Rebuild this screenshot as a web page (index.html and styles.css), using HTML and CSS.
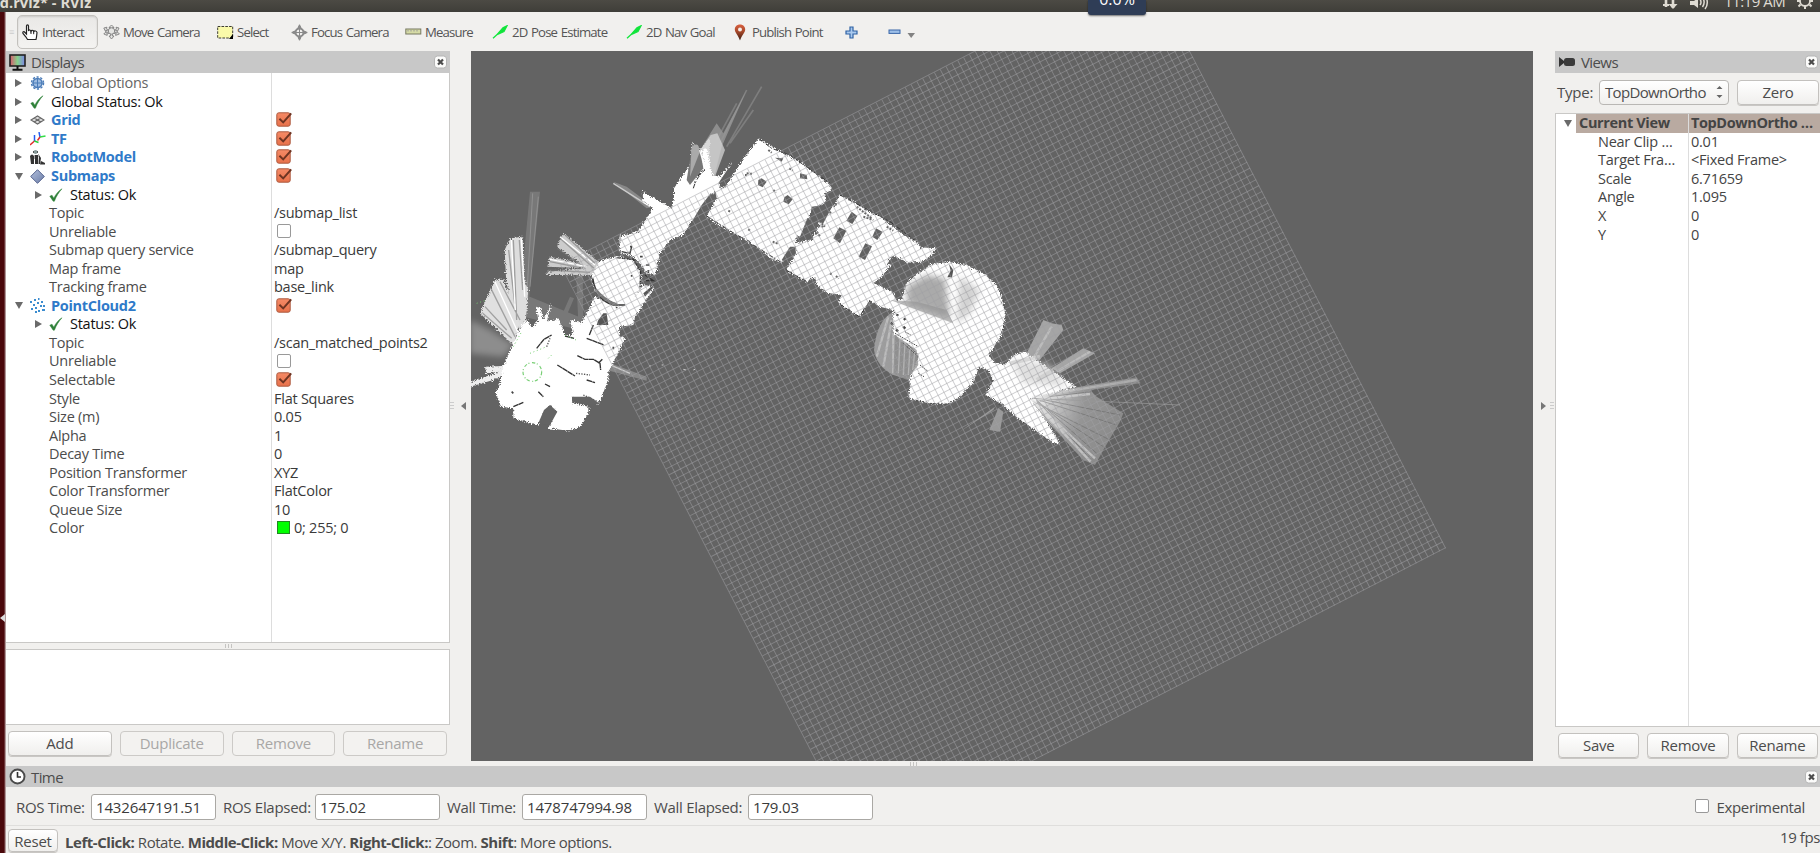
FILE: index.html
```html
<!DOCTYPE html>
<html lang="en">
<head>
<meta charset="utf-8">
<title>RViz</title>
<link rel="stylesheet" href="styles.css">
</head>
<body>
<svg class="defs" width="0" height="0" aria-hidden="true">
  <defs>
    <linearGradient id="chk" x2="0" y2="1"><stop offset="0" stop-color="#f58a66"/><stop offset="1" stop-color="#e8714a"/></linearGradient>
    <linearGradient id="pin" x2="0" y2="1"><stop offset="0" stop-color="#d9603f"/><stop offset=".45" stop-color="#a5482a"/><stop offset="1" stop-color="#3c1c10"/></linearGradient>
    <linearGradient id="scr"><stop offset="0" stop-color="#d85a6c"/><stop offset=".5" stop-color="#86d08c"/><stop offset="1" stop-color="#7c86e8"/></linearGradient>
    <linearGradient id="dia" x2="1" y2="1"><stop offset="0" stop-color="#b4c2de"/><stop offset="1" stop-color="#6a7ba6"/></linearGradient>
  </defs>
  <symbol id="check" viewBox="0 0 16 16"><rect x=".8" y="1.8" width="13.4" height="13.4" rx="2" fill="url(#chk)" stroke="#ab5a40"/><path d="M3.4 7.8L7.2 11.4L15.2 2.4" fill="none" stroke="#6e3422" stroke-width="2"/></symbol>
  <symbol id="tick" viewBox="0 0 14 14"><path d="M.8 8.2L3 7.2L4.8 10.2C7 5.8 9.4 3 13 .8C9.600 4.500 7.500 8 5.400 13.200H4.200Z" fill="#2e8038" stroke="#2e8038" stroke-width=".5"/></symbol>
  <symbol id="close" viewBox="0 0 13 13"><rect x=".5" y=".5" width="12" height="12" rx="3" fill="#fbfbfa" stroke="#b5b5b5"/><path d="M4 4L9 9M9 4L4 9" stroke="#4c4c4c" stroke-width="2.2"/></symbol>
  <symbol id="arrow" viewBox="0 0 16 14"><path d="M1 13.200L12 3.200M5 9.600L11 2.800L15 .8L12 6.600Z" fill="#12dc3c" stroke="#12e63c" stroke-width="1.300"/></symbol>
</svg>
<div class="screen">
  <header class="titlebar"><span class="wtitle">ed.rviz* - RViz</span>
    <div class="tray">
      <svg width="16" height="14"><path d="M4 0V7M11 0V8" stroke="#dfdbd2" stroke-width="2.600"/><path d="M6.500 4H15.500L11 9Z" fill="#dfdbd2"/><path d="M1 5H7" stroke="#dfdbd2" stroke-width="2"/></svg>
      <svg width="20" height="14"><path d="M0 1H4L8 -2V8L4 5H0Z" fill="#dfdbd2"/><path d="M10 -1Q12 2.500 10 5M13 -2Q15.500 3 12.500 7M16 -3Q19 4 15 9" fill="none" stroke="#dfdbd2" stroke-width="1.500"/></svg>
      <span class="clock">11:19 AM</span>
      <svg width="16" height="14"><circle cx="8" cy="1" r="5" fill="none" stroke="#dfdbd2" stroke-width="1.800"/><path d="M8 6V9M3.500 4.500L1.500 6.500M12.500 4.500L14.500 6.500M0 1H3M13 1H16" stroke="#dfdbd2" stroke-width="2"/></svg>
    </div>
    <div class="badge"><span>0.0%</span></div>
  </header>
  <div class="edge"><i></i></div>
  <div class="window">
    <nav class="toolbar">
      <span class="grip">≡</span>
      <div class="tool pressed"><svg width="16" height="17" viewBox="0 0 16 17"><path d="M4.500 10V2Q4.500 .8 5.500 .8Q6.500 .8 6.500 2V7Q6.800 5.800 7.800 6Q8.800 6 9 7.200Q9.500 6 10.500 6.300Q11.600 6.500 11.700 7.500Q12.500 6.600 13.500 7Q14.800 7.200 15 8.500L14.500 13L14 15.500H5.500L4 13L1 9.500Q.4 7.500 2 7.500Z" fill="#fff" stroke="#222" stroke-width="1.200"/><path d="M9 7V10M11.700 7.500V10.200" stroke="#222"/></svg><span>Interact</span></div>
      <div class="tool"><svg width="17" height="16" viewBox="0 0 17 16"><g fill="#e5e5e3" stroke="#808080" stroke-width=".9"><path d="M8.500 1L6 3.500H7.600V12H6L8.500 15L11 12H9.400V3.500H11Z"/><path d="M.8 4L4 3.200L3.200 4.800L14 9.200L14 7.600L16.400 10L12.600 11.400L13 10L2.800 6.200L2.600 7.600Z"/><path d="M16 4L13 3.200L13.800 4.800L3.200 9.200L3.200 7.600L.8 10L4.200 11.400L4 10L14 6.200L14.300 7.600Z"/><circle cx="8.500" cy="7" r="3.200"/></g></svg><span>Move Camera</span></div>
      <div class="tool"><svg width="17" height="15"><rect x=".7" y="1.500" width="15" height="11.500" fill="#fafaaa" stroke="#3c3c32" stroke-dasharray="2.600 1.200"/><path d="M16 9V14H12Z"/></svg><span>Select</span></div>
      <div class="tool"><svg width="17" height="17" viewBox="0 0 17 17"><g fill="none" stroke="#8a8a8a"><circle cx="8.500" cy="8.500" r="4" stroke-width="2"/><path d="M8.500 .8V16.200M.8 8.500H16.200M8.500 .8L7 3.500H10ZM8.500 16.200L7 13.500H10ZM.8 8.500L3.500 7V10ZM16.200 8.500L13.500 7V10Z"/></g></svg><span>Focus Camera</span></div>
      <div class="tool"><svg width="17" height="8"><rect x=".8" y="1" width="15" height="5" fill="#d6dba6" stroke="#777961"/><path d="M3 2V3.500M6 2V3.500M9 2V3.500M12 2V3.500" stroke="#999"/></svg><span>Measure</span></div>
      <div class="tool"><svg width="16" height="14"><use href="#arrow"/></svg><span>2D Pose Estimate</span></div>
      <div class="tool"><svg width="16" height="14"><use href="#arrow"/></svg><span>2D Nav Goal</span></div>
      <div class="tool"><svg width="12" height="17"><path d="M6 .5C2.800 .5 .8 2.800 .8 5.500C.8 8.500 4 10.500 6 16.500C8 10.500 11.200 8.500 11.200 5.500C11.200 2.800 9.200 .5 6 .5Z" fill="url(#pin)"/><circle cx="6" cy="5.500" r="2" fill="#f5eeea"/></svg><span>Publish Point</span></div>
      <div class="tool"><svg width="13" height="13"><path d="M5 1H8V5H12V8H8V12H5V8H1V5H5Z" fill="#a9c9ee" stroke="#2f62a4" stroke-width="1.200"/></svg></div>
      <div class="tool"><svg width="28" height="14"><rect x="2" y="5" width="11" height="3.400" fill="#9dbfe8" stroke="#3a66a8"/><path d="M20.500 8H28L24.200 13Z" fill="#828282"/></svg></div>
    </nav>
    <div class="middle">
      <aside class="displays">
        <div class="dock"><svg width="17" height="17"><rect x="1" y="1" width="15" height="11" fill="url(#scr)" stroke="#222" stroke-width="1.600"/><path d="M8.500 12V15M3.500 15.700H13.500" stroke="#111" stroke-width="2"/></svg><span>Displays</span><svg class="x" width="13" height="14"><use href="#close"/></svg></div>
        <div class="tree">
          <div class="names">
            <div class="row top"><i class="r"></i><svg class="ic" width="15" height="15"><circle cx="7.500" cy="7" r="4.500" fill="#9dbbe0" stroke="#4b7cb8" stroke-width="1.500"/><circle cx="7.500" cy="7" r="6" fill="none" stroke="#4b7cb8" stroke-width="1.500" stroke-dasharray="2.200 1.600"/><path d="M7.500 2V12M2.500 7H12.500" stroke="#4b7cb8"/></svg><span class="g">Global Options</span></div>
            <div class="row top"><i class="r"></i><svg class="ic" width="14" height="14"><use href="#tick"/></svg><span class="k">Global Status: Ok</span></div>
            <div class="row top"><i class="r"></i><svg class="ic" width="15" height="11"><path d="M1 5L7.500 1L14 5L7.500 9ZM4.200 3L10.800 7M4.200 7L10.800 3" fill="#ddd" stroke="#666" stroke-width="1.100"/></svg><b>Grid</b></div>
            <div class="row top"><i class="r"></i><svg class="ic" width="16" height="14"><g fill="none" stroke-width="1.500"><path d="M4.500 9V3" stroke="#225cf0"/><path d="M4.500 9L0 13" stroke="#e22c2c"/><path d="M4.500 9L8.500 10.500" stroke="#23d13b"/><path d="M10 5L9 0" stroke="#225cf0"/><path d="M10 5L15.500 4" stroke="#32dd46"/><path d="M10 5L7.500 8.500" stroke="#e22c2c"/></g></svg><b>TF</b></div>
            <div class="row top"><i class="r"></i><svg class="ic" width="16" height="15"><path d="M3 1H8V3H3ZM0 6Q2 3 4 6V14H1ZM5 5H8V14H5ZM9 5L11 8L10 14H8.500ZM11 11L15 13V14.500H10Z" fill="#333"/><circle cx="5.500" cy="2" r="2" fill="#899"/><path d="M4.500 5V9M8.500 4V7" stroke="#aaa"/></svg><b>RobotModel</b></div>
            <div class="row top"><i class="d"></i><svg class="ic" width="15" height="15"><path d="M7.500 .7L14.300 7.500L7.500 14.300L.7 7.500Z" fill="url(#dia)" stroke="#52608c"/></svg><b>Submaps</b></div>
            <div class="row sub"><i class="r"></i><svg class="ic" width="14" height="14"><use href="#tick"/></svg><span class="k">Status: Ok</span></div>
            <div class="row leaf">Topic</div>
            <div class="row leaf">Unreliable</div>
            <div class="row leaf">Submap query service</div>
            <div class="row leaf">Map frame</div>
            <div class="row leaf">Tracking frame</div>
            <div class="row top"><i class="d"></i><svg class="ic" width="16" height="15"><path d="M0 4H2M4 2H6M8 1H9.500M11 4H13M3 7H5M7 5H9M10 8H12M1 11H3M5 10H7M8 13H10M12 12H15M5 14H7M13 8H15" fill="none" stroke="#3b8ccf" stroke-width="1.900"/></svg><b>PointCloud2</b></div>
            <div class="row sub"><i class="r"></i><svg class="ic" width="14" height="14"><use href="#tick"/></svg><span class="k">Status: Ok</span></div>
            <div class="row leaf">Topic</div>
            <div class="row leaf">Unreliable</div>
            <div class="row leaf">Selectable</div>
            <div class="row leaf">Style</div>
            <div class="row leaf">Size (m)</div>
            <div class="row leaf">Alpha</div>
            <div class="row leaf">Decay Time</div>
            <div class="row leaf">Position Transformer</div>
            <div class="row leaf">Color Transformer</div>
            <div class="row leaf">Queue Size</div>
            <div class="row leaf">Color</div>
          </div>
          <div class="values">
            <div class="row"></div><div class="row"></div>
            <div class="row"><svg class="cb"><use href="#check"/></svg></div>
            <div class="row"><svg class="cb"><use href="#check"/></svg></div>
            <div class="row"><svg class="cb"><use href="#check"/></svg></div>
            <div class="row"><svg class="cb"><use href="#check"/></svg></div>
            <div class="row"></div>
            <div class="row">/submap_list</div>
            <div class="row"><i class="box"></i></div>
            <div class="row">/submap_query</div>
            <div class="row">map</div>
            <div class="row">base_link</div>
            <div class="row"><svg class="cb"><use href="#check"/></svg></div>
            <div class="row"></div>
            <div class="row">/scan_matched_points2</div>
            <div class="row"><i class="box"></i></div>
            <div class="row"><svg class="cb"><use href="#check"/></svg></div>
            <div class="row">Flat Squares</div>
            <div class="row">0.05</div>
            <div class="row">1</div>
            <div class="row">0</div>
            <div class="row">XYZ</div>
            <div class="row">FlatColor</div>
            <div class="row">10</div>
            <div class="row"><i class="swatch"></i>0; 255; 0</div>
          </div>
        </div>
        <div class="hgrip"><i></i><i></i><i></i></div>
        <div class="info"></div>
        <div class="buttons"><div class="btn">Add</div><div class="btn off">Duplicate</div><div class="btn off">Remove</div><div class="btn off">Rename</div></div>
      </aside>
      <div class="splitter left"><span class="dots"></span><i class="tl"></i></div>
      <main class="viewer">
        <svg width="1062" height="710" viewBox="471 51 1062 710">
          <defs>
            <filter id="rough" x="-5%" y="-5%" width="110%" height="110%"><feTurbulence type="fractalNoise" baseFrequency=".3" numOctaves="3" seed="4"/><feDisplacementMap in="SourceGraphic" scale="16" xChannelSelector="R" yChannelSelector="G"/></filter>
            <filter id="soft" x="-20%" y="-20%" width="140%" height="140%"><feGaussianBlur stdDeviation="9"/></filter>
            <radialGradient id="f2" gradientUnits="userSpaceOnUse" cx="540" cy="475" r="330"><stop offset="0" stop-color="#fff"/><stop offset=".2" stop-color="#ccc"/><stop offset=".5" stop-color="#959595"/><stop offset="1" stop-color="#868686"/></radialGradient>
          </defs>
          <rect x="471" y="51" width="1062" height="710" fill="#636363"/>

          <!-- south-west rooms -->
          <g transform="translate(470 90) scale(.33333)">
            <path d="M180 305H210L178 620H150ZM130 600L350 690L330 720L160 680ZM318 540L338 545L340 690L325 700ZM300 620L312 625L280 700H265Z" fill="#999" opacity=".4"/>
            <path d="M0 690L60 720L130 765L100 800L0 790Z" fill="#ccc" opacity=".4" filter="url(#soft)"/>
            <path d="M188 310L172 590M205 320L180 590" stroke="#aaa" stroke-width="3" opacity=".5"/>
            <path d="M430 275L470 290L550 350L530 355ZM410 815L530 860V872L410 840Z" fill="#999" opacity=".7"/>
            <path d="M430 280L540 350M410 820L480 850" stroke="#ccc" stroke-width="4"/>
            <g filter="url(#rough)">
              <path d="M120 445L158 440L162 570L175 600L165 720L128 700L108 560L104 480Z" fill="#ddd"/>
              <path d="M75 568L100 570L150 700L130 765L30 670Z" fill="#e0e0e0"/>
              <path d="M282 430L385 515L370 555L225 555L232 545L350 535L232 530L240 500L330 520L262 470L270 450Z" fill="#ccc"/>
              <path d="M0 876L90 845L48 850L45 830L100 828L110 850L70 870L0 890Z" fill="#eee"/>
              <path d="M518 305L605 355L612 325V295L660 225L668 155L690 180L720 145V320L705 350L660 400L640 435L600 450L570 490L555 555L530 550L518 530L490 500L450 490L448 440L505 425L548 355L520 335Z" fill="#fff"/>
              <path d="M385 515L440 498L490 510L515 550L512 595L490 630L520 585L555 590L495 680L490 705L448 710L447 735L465 745L430 820L415 845V870L385 945L306 920L310 940L355 950V970L330 1010L295 1022L235 1015L258 965L240 945L222 970L205 1005L130 985V955L95 950L76 910L90 880L100 830L128 765L155 705L175 690L185 715L205 690L198 650L212 655L220 690L245 640L230 695L265 685L285 735H310L300 690L335 700L375 620L440 645L375 605L365 560Z" fill="#fff"/>
            </g>
            <path d="M130 450L140 690M148 450L158 600M116 480L134 640M60 590L135 740M90 575L150 690M45 650L110 720M38 670L125 745M270 445L372 535M262 475L340 530M285 435L375 520M240 515L340 535M234 540L360 547" fill="none" stroke="#777" stroke-width="4" opacity=".6"/>
            <path d="M124 450L136 660M154 445L164 620M75 575L145 730M270 440L375 525M240 508L350 530" fill="none" stroke="#fff" stroke-width="4"/>
            <path d="M668 160Q690 170 700 235L660 285L650 270Z" fill="#777"/>
            <path d="M670 295Q680 245 715 235M455 485L480 490L485 470M525 555L550 572H528" fill="none" stroke="#333" stroke-width="4"/>
            <path d="M440 503L490 508L512 545L510 592" fill="none" stroke="#333" stroke-width="4" stroke-dasharray="12 3"/>
            <path d="M368 565Q378 630 430 645H465" fill="none" stroke="#333" stroke-width="5"/>
            <path d="M376 598Q400 630 440 645" fill="none" stroke="#777" stroke-width="9"/>
            <path d="M385 690L400 670H410L415 705H380ZM520 610L550 585L548 595L525 620Z" fill="#555"/>
            <path d="M200 775L222 748L245 735M322 797L345 808L370 808L390 820L392 840M385 820L397 808M350 745L402 765M262 825L315 858M350 870L375 878M205 905L220 920M130 950L160 937M358 735L370 705M285 738L312 745M225 882L240 890" fill="none" stroke="#333" stroke-width="4" stroke-dasharray="17 1"/>
            <path d="M318 850L360 855M340 915L390 938M230 770L240 745" stroke="#555" stroke-width="4" stroke-dasharray="4 4" fill="none"/>
            <path d="M306 920H360L390 942L350 945L306 935ZM222 960L240 945L262 965L240 1005L205 1000Z" fill="#646464"/>
            <circle cx="187" cy="846" r="28" fill="none" stroke="#5fc55c" stroke-width="3.500" stroke-dasharray="10 5 3 8" opacity=".85"/>
            <path d="M130 770L155 725M20 640L50 630M180 790L230 770M285 735L318 750M235 805L250 790" stroke="#75cf70" stroke-width="3" stroke-dasharray="3 8"/>
            <path d="M540 825V830M640 838L648 840M670 840L675 838M575 825H580" stroke="#ccc" stroke-width="3"/>
            <path d="M510 500H518M528 525H538M535 540V550M485 555V560M430 770V778M440 650V655M125 905L130 910M480 470H486" stroke="#444" stroke-width="5"/>
          </g>

          <!-- central rooms -->
          <g transform="translate(690 110) scale(.33333)">
            <path d="M100 70L170 -60L95 110L75 190L60 200L30 120L80 40Z" fill="#aaa" opacity=".6"/>
            <path d="M110 110L215 -70M90 100L170 -60M120 100L190 0M80 90L140 -20" stroke="#999" stroke-width="5" opacity=".5"/>
            <path d="M35 115L62 75L82 70L105 120L75 200L60 195Z" fill="#ddd" opacity=".7"/>
            <path d="M5 110Q30 90 28 130L0 200Z" fill="#aaa"/>
            <g filter="url(#rough)" fill="#fff">
              <path d="M35 120L50 115L65 195L90 200L125 155L95 215L85 235L65 255L40 290L0 340V250L15 210L45 175Z"/>
              <path d="M190 108L205 85L245 110L280 130L330 155L420 225L425 240L405 250L410 275L365 300L335 375L320 380L315 410L275 458L250 450L190 405L140 375L85 345L50 318L80 265L75 235L105 232L155 155Z"/>
              <path d="M365 390L385 350L400 290L430 290L450 255L490 275L530 300L570 320L615 355L640 375L680 395L690 412L740 415L725 435L695 455L650 458L610 435L590 460L605 465L590 480L575 500L550 520L610 550L620 580L660 600L640 640L610 600L570 590L540 572L508 620L445 580L455 555L410 548L380 525L375 500L350 515L288 480L318 430L315 400Z"/>
            </g>
            <path d="M85 220L115 175L132 185L105 230ZM35 285L62 250L78 260L55 310L35 320L0 345ZM365 290L400 285L420 250L440 265L400 340L360 330ZM330 380L352 325L365 335L365 390ZM275 450L300 410H318L295 465ZM205 210L215 205L230 215L218 232L204 225ZM283 262L293 255L308 268L296 283L280 275ZM485 305L502 318L487 342L469 332ZM448 352L469 362L450 400L430 385ZM558 355L578 366L562 390L547 380ZM526 400L546 409L525 450L506 440ZM330 190L350 195L352 208L330 205ZM255 143L280 145L275 155Z" fill="#626262"/>
            <path d="M205 85L245 115L300 135L420 220M450 255L600 335L680 395M50 318L140 375L180 395M190 405L275 458M540 572L508 620L445 580M288 480L350 515M10 235Q20 200 45 180" fill="none" stroke="#333" stroke-width="3" stroke-dasharray="14 3 5 6"/>
            <path d="M170 190L190 192M250 240L258 248M298 175L308 182M175 358L180 362M115 302L122 306M248 395L265 402M420 490L425 493M438 498L446 506M165 195H170M365 340L390 380M375 370L385 375M395 340L405 350M410 300L425 310M520 320L550 330M375 345L400 350M435 285L445 280M235 120L245 128M500 290L545 325M590 350L610 362" stroke="#666" stroke-width="6" stroke-dasharray="6 4"/>
          </g>

          <!-- round hall and east room -->
          <g transform="translate(850 240) scale(.33333)">
            <path d="M130 215Q80 240 72 330Q80 380 130 405L180 420L210 330Z" fill="#9c9c9c"/>
            <path d="M115 230L80 350M125 240L100 380M130 280L130 400" stroke="#ddd" stroke-width="7" opacity=".5"/>
            <path d="M530 340L580 240L605 250L635 255L640 270L565 365ZM605 385L700 325L735 340L630 400Z" fill="#a5a5a5"/>
            <path d="M540 470L600 455L860 412L872 430L720 450L740 470L820 520L810 545L795 570L760 630L735 675L700 660L550 500Z" fill="url(#f2)"/>
            <path d="M435 500L325 578L430 510ZM445 505L460 515L450 575L418 570Z" fill="#999"/>
            <path d="M545 475L990 495" stroke="#999" stroke-width="3" opacity=".7"/>
            <g filter="url(#rough)" fill="#fff">
              <path d="M70 130L130 160L135 180L155 180L170 130L205 100L245 72L300 66L350 75L400 100L440 135L458 180L468 225L455 285L415 345L430 365L465 375L490 345L525 335L560 360L610 395L680 440L600 460L540 475L600 560L630 610L610 610L545 565L510 540L460 495L405 465L430 420L415 390L388 380L370 425L325 475L290 492L235 490L175 475L180 415L205 350L130 280L130 210L60 180Z"/>
            </g>
            <path d="M170 140L230 105L285 115L300 235L170 190Z" fill="#9c9c9c" filter="url(#soft)" opacity=".85"/>
            <path d="M330 110L390 150L360 220L320 250Z" fill="#bbb" filter="url(#soft)" opacity=".65"/>
            <path d="M480 360L600 370L650 440L520 430Z" fill="#ccc" filter="url(#soft)" opacity=".6"/>
            <path d="M120 180L310 250L290 210L200 185Z" fill="#909090" opacity=".6"/>
            <path d="M135 285L200 330L205 375L170 420L130 400Z" fill="#8b8b8b" opacity=".75"/>
            <path d="M150 295L145 400M165 305L160 405M180 320L175 405M195 330L188 390" stroke="#ccc" stroke-width="4" opacity=".6"/>
            <path d="M297 72L310 90L306 112L292 112L302 92Z" fill="#555"/>
            <path d="M150 415L178 425L180 440L168 470L150 450Z" fill="#636363"/>
            <path d="M135 280L205 320M170 310L205 345M205 350L160 310M210 375L235 395M205 400L222 410M165 275L182 285" stroke="#444" stroke-width="3" stroke-dasharray="5 3"/>
            <path d="M138 268L144 274M160 260L166 266M122 248L128 252M162 235L166 240M142 222V228" stroke="#444" stroke-width="7"/>
            <path d="M560 420L610 390M480 370L570 350" stroke="#ccc" stroke-width="12" opacity=".7"/>
            <path d="M550 490L690 655M550 485L780 600M560 480L740 640M560 475L810 525M560 480L720 655M560 485L760 620M560 478L800 555M600 470L725 455" stroke="#555" stroke-width="3" opacity=".4"/>
            <path d="M545 478L722 665M550 483L735 655M560 478L720 462" stroke="#e0e0e0" stroke-width="7" opacity=".6"/>
            <path d="M550 470L860 420M620 395L720 335M550 355L605 260" stroke="#e0e0e0" stroke-width="7" opacity=".4"/>
            <path d="M430 420L405 465L450 495M458 180L468 225L455 285M290 492L235 490L190 480M510 540L545 565L610 610" fill="none" stroke="#444" stroke-width="3" stroke-dasharray="6 5"/>
          </g>

          <!-- one-metre grid, 100 x 100 cells -->
          <g transform="translate(1446 548) rotate(-117.260)" fill="none" stroke="#a0a0a4" stroke-opacity=".55" stroke-width="657">
            <path d="M0 -328.500H658" stroke-dasharray=".9 5.670"/>
            <path d="M328.500 0V-658" stroke-dasharray=".9 5.670"/>
          </g>
        </svg>
      </main>
      <div class="splitter right"><i class="tr"></i><span class="dots"></span></div>
      <aside class="views">
        <div class="dock"><svg width="17" height="10"><path d="M0 0L5 4V6L0 10Z" fill="#333"/><rect x="5" y="1" width="11" height="8" rx="2.500" fill="#3b3b3b"/></svg><span>Views</span><svg class="x" width="13" height="14"><use href="#close"/></svg></div>
        <div class="type"><span>Type:</span><div class="combo"><span>TopDownOrtho</span><svg width="7" height="14"><path d="M.5 4L3.500 1L6.500 4ZM.5 10L3.500 13L6.500 10Z" fill="#666"/></svg></div><div class="btn zero">Zero</div></div>
        <div class="vtree">
          <div class="vn"><div class="row cur"><i class="d"></i><b>Current View</b></div><div class="row">Near Clip …</div><div class="row">Target Fra…</div><div class="row">Scale</div><div class="row">Angle</div><div class="row">X</div><div class="row">Y</div></div>
          <div class="vv"><div class="row cur"><b>TopDownOrtho …</b></div><div class="row">0.01</div><div class="row">&lt;Fixed Frame&gt;</div><div class="row">6.71659</div><div class="row">1.095</div><div class="row">0</div><div class="row">0</div></div>
        </div>
        <div class="vbuttons"><div class="btn">Save</div><div class="btn">Remove</div><div class="btn">Rename</div></div>
      </aside>
    </div>
    <div class="hgrip big"><i></i><i></i><i></i></div>
    <section class="time">
      <div class="dock"><svg width="17" height="17"><circle cx="8.500" cy="8.500" r="7" fill="#fff" stroke="#4a4a4a" stroke-width="1.900"/><path d="M8.500 4V9H12" fill="none" stroke="#333" stroke-width="1.600"/></svg><span>Time</span><svg class="x" width="13" height="14"><use href="#close"/></svg></div>
      <div class="fields">
        <label class="l1">ROS Time:</label><div class="field">1432647191.51</div>
        <label class="l2">ROS Elapsed:</label><div class="field">175.02</div>
        <label class="l3">Wall Time:</label><div class="field">1478747994.98</div>
        <label class="l4">Wall Elapsed:</label><div class="field">179.03</div>
        <div class="exp"><i class="box"></i><span>Experimental</span></div>
      </div>
    </section>
    <footer class="status"><div class="btn reset">Reset</div><p><b>Left-Click:</b> Rotate. <b>Middle-Click:</b> Move X/Y. <b>Right-Click:</b>: Zoom. <b>Shift</b>: More options.</p><span class="fps">19 fps</span></footer>
  </div>
</div>
</body>
</html>
```
FILE: styles.css
```css
* { box-sizing: border-box; }
body { margin: 0; width: 1820px; height: 853px; overflow: hidden; font: 14.5px/18px "Open Sans", "Noto Sans", sans-serif; letter-spacing: -0.25px; color: #4c4c4c; background: #f1f0ee; }
b { font-weight: 700; }
svg { display: block; flex: none; }
.defs { position: absolute; }
.screen { display: grid; grid-template: 12px 841px / 6px 1814px; }
.titlebar { grid-column: 1 / 3; position: relative; height: 12px; display: flex; justify-content: space-between; background: linear-gradient(#4c4a44, #3f3e39); color: #dfdbd2; }
.wtitle { height: 12px; overflow: hidden; margin-left: -9px; font-weight: 700; line-height: 5px; white-space: nowrap; letter-spacing: .1px; }
.tray { display: flex; height: 12px; overflow: hidden; padding-right: 7px; }
.tray svg:nth-child(2) { margin-left: 12px; }
.clock { width: 60px; margin: 0 13px 0 14px; line-height: 2px; font-size: 15px; white-space: nowrap; letter-spacing: -.5px; }
.badge { position: absolute; left: 1088px; top: 0; width: 58px; height: 15px; overflow: hidden; background: #2f3d56; border-radius: 0 0 3px 3px; box-shadow: 0 1px 2px #0008; text-align: center; color: #fff; font-size: 16px; line-height: -1px; letter-spacing: 0; }
.badge span { display: block; line-height: 0; margin-top: -1px; }
.edge { background: linear-gradient(90deg, #4a080b 0 4px, #8b6265 5px, #d8cfcd); padding-top: 602px; }
.edge i { display: block; border: 4px solid transparent; border-left: 0; border-right: 5px solid #ddd; width: 5px; }
.window { display: flex; flex-direction: column; height: 841px; }

.toolbar { height: 39px; flex: none; display: grid; grid-template-columns: 11px 86px 114px 74px 114px 87px 134px 108px 111px 42px 40px; align-items: center; font-size: 13.2px; letter-spacing: -.85px; word-spacing: 1px; color: #555; }
.grip { color: #ccc; font-size: 9px; padding-left: 3px; }
.tool { display: flex; align-items: center; gap: 3px; white-space: nowrap; margin-top: 1px; }
.tool svg + span { line-height: 18px; margin-top: -1px; }
.pressed { width: 81px; height: 34px; padding-left: 4px; gap: 4px; border: 1px solid #c3c1bd; border-radius: 5px; background: linear-gradient(#e9e8e6, #f4f3f1); box-shadow: inset 0 1px 2px #0002; margin-top: 1px; }
.pressed span { letter-spacing: -.7px; }
.tool:nth-child(7), .tool:nth-child(8), .tool:nth-child(9) { gap: 4px; }
.tool:nth-child(9) { gap: 6px; }

.middle { height: 710px; display: grid; grid-template-columns: 444px 21px 1062px 22px 265px; }
.displays { display: flex; flex-direction: column; }
.dock { height: 22px; flex: none; display: flex; align-items: center; gap: 5px; padding: 0 3px; background: #c8c8c8; font-size: 15px; letter-spacing: -.6px; }
.dock .x { margin-left: auto; }
.tree { height: 570px; display: grid; grid-template-columns: 266px 1fr; background: #fff; border: solid #c9c8c6; border-width: 0 1px 1px 0; }
.names, .values { padding-top: 1px; }
.names { border-right: 1px solid #ddd; }
.row { height: 18.550px; display: flex; align-items: center; white-space: nowrap; line-height: 18px; }
.row.top, .row.sub { display: grid; grid-template-columns: 15px 21px 1fr; align-items: center; }
.row.top { padding-left: 9px; }
.row.sub { padding-left: 29px; grid-template-columns: 14px 21px 1fr; }
.row.leaf { padding-left: 43px; }
.names b { color: #2f7ac9; letter-spacing: -.3px; }
.k { color: #111; }
.g { color: #666; }
i.r { width: 0; border: 4px solid transparent; border-left: 7px solid #6a6a6a; border-right: 0; }
i.d { width: 0; border: 4px solid transparent; border-top: 7px solid #6a6a6a; border-bottom: 0; }
.values .row { padding-left: 2px; color: #3a3a3a; }
.cb { width: 16px; height: 16px; margin-left: 2px; margin-top: -2px; }
.box { width: 14px; height: 14px; margin-left: 3px; margin-top: -1px; border: 1px solid #999; border-radius: 2px; background: #fff; }
.swatch { width: 13px; height: 13px; margin: -1px 4px 0 3px; background: #0f0; border: 1px solid #282; }
.hgrip { height: 6px; flex: none; display: flex; gap: 2px; justify-content: center; padding-top: 1px; }
.hgrip i { width: 1px; height: 4px; background: #c5c4c2; }
.info { height: 76px; flex: none; background: #fff; border: 1px solid #c9c8c6; border-left: 0; }
.buttons { display: flex; gap: 8px; padding: 6px 3px 0 2px; }
.btn { flex: 1; height: 25px; border: 1px solid #c3c1be; border-radius: 4px; background: linear-gradient(#fff, #f0efed); box-shadow: 0 1px 0 #c9c7c4; text-align: center; line-height: 22px; font-size: 15px; }
.off { color: #a8a7a6; border-color: #cccac7; background: #f3f2f0; box-shadow: none; }
.splitter { display: flex; align-items: center; }
.dots { width: 4px; height: 9px; background: repeating-linear-gradient(#ccc 0 1px, transparent 1px 3px); }
.left { gap: 7px; }
.right { justify-content: center; gap: 4px; padding-left: 6px; }
.tl, .tr { border: 4px solid transparent; border-left: 0; border-right: 5px solid #777; }
.tr { border-right: 0; border-left: 5px solid #777; }
.viewer { overflow: hidden; background: #636363; }

.type { height: 40px; flex: none; display: flex; align-items: center; padding: 0 0 2px 2px; font-size: 15px; }
.type > span { width: 42px; }
.combo { width: 130px; height: 25px; margin-right: 8px; display: flex; justify-content: space-between; align-items: center; padding: 0 5px; border: 1px solid #b9b7b4; border-radius: 4px; background: linear-gradient(#fff, #f0efed); letter-spacing: -.65px; }
.zero { flex: none; width: 82px; }
.vtree { height: 614px; display: grid; grid-template-columns: 133px 1fr; background: #fff; border: 1px solid #c9c8c6; border-right: 0; }
.vn { border-right: 1px solid #ddd; }
.vn .row { padding-left: 42px; }
.vv .row { padding-left: 2px; }
.vtree .row { color: #444; }
.vn .row.cur { padding-left: 8px; background: linear-gradient(90deg, #fff 20px, #b9aaa1 20px); gap: 7px; }
.vv .cur { background: #b9aaa1; }
.vv .cur b { letter-spacing: -.4px; }
.vn .cur b { letter-spacing: -.35px; }
.views { display: flex; flex-direction: column; }
.views .dock { padding: 0 2px 0 4px; gap: 5px; }
.vbuttons { display: flex; gap: 8px; padding: 6px 2px 0 3px; }

.hgrip.big { height: 5px; }
.time { flex: none; }
.time .dock { height: 21px; padding-right: 2px; }
.fields { height: 39px; display: flex; align-items: center; padding: 1px 0 0 10px; border-bottom: 1px solid #dfdedc; font-size: 15px; }
.fields label { flex: none; white-space: nowrap; letter-spacing: -.3px; }
.l1 { width: 75px; } .l2 { width: 92px; } .l3 { width: 75px; } .l4 { width: 94px; }
.field { width: 125px; height: 26px; margin-right: 7px; padding-left: 4px; border: 1px solid #aaa8a4; border-radius: 3px; background: #fff; line-height: 24px; color: #3a3a3a; letter-spacing: -.15px; }
.exp { margin-left: auto; display: flex; align-items: center; gap: 8px; padding-right: 15px; letter-spacing: -.35px; }
.status { flex: 1; display: flex; padding: 3px 0 0 2px; font-size: 15px; }
.reset { flex: none; width: 50px; height: 23px; line-height: 22px; }
.status p { margin: 3px 0 0 7px; line-height: 20px; letter-spacing: -.46px; }
.fps { margin-left: auto; margin-top: -2px; line-height: 20px; letter-spacing: -.4px; }
```
